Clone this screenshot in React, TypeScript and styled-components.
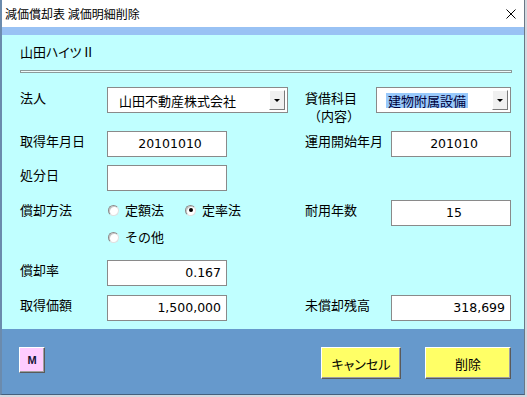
import React from "react";
import styled, { createGlobalStyle } from "styled-components";

const GlobalStyle = createGlobalStyle`
  html, body { margin: 0; padding: 0; background: #d4d9e0; }
  body { font-family: "Noto Sans CJK JP", "Noto Sans", sans-serif; color: #000; }
  #root { width: 527px; height: 397px; overflow: hidden; }
`;

const Window = styled.div`
  width: 525px;
  box-sizing: border-box;
  display: flex;
  flex-direction: column;
  border-left: 2px solid #6b8bad;
  border-right: 1px solid #6a7785;
  border-bottom: 1px solid #44607e;
`;

const TitleBar = styled.div`
  height: 27px;
  background: #fff;
  display: flex;
  align-items: center;
  justify-content: space-between;
  padding: 0 8px 0 3px;
  font-size: 12px;
  line-height: 27px;
`;

const CloseIcon = styled.svg`
  width: 10px;
  height: 10px;
  display: block;
`;

const Strip = styled.div`
  height: 8px;
  background: #99c2f4;
`;

const Body = styled.div`
  background: #c0ffff;
  padding: 7px 12px 8px 18px;
  display: flex;
  flex-direction: column;
`;

const Header = styled.div`
  font-size: 13px;
  line-height: 20px;
  height: 20px;
  font-feature-settings: "palt";
`;

const Separator = styled.div`
  margin-top: 8px;
  height: 3px;
  box-sizing: border-box;
  border: 1px solid #8c9a9a;
  background: #eefcfc;
`;

const Row = styled.div<{ $h: number; $mt: number }>`
  display: flex;
  align-items: flex-start;
  height: ${(p) => p.$h}px;
  margin-top: ${(p) => p.$mt}px;
`;

const LeftCell = styled.div`
  width: 285px;
  display: flex;
  align-items: flex-start;
`;

const RightCell = styled.div`
  display: flex;
  align-items: flex-start;
`;

const Label = styled.div<{ $w: number; $lh?: number; $pt?: number }>`
  width: ${(p) => p.$w}px;
  font-size: 13px;
  line-height: ${(p) => p.$lh ?? 20}px;
  padding-top: ${(p) => p.$pt ?? 0}px;
  flex-shrink: 0;
`;

const SubLine = styled.div`
  padding-left: 3px;
`;

const TextBox = styled.div<{ $w: number; $align: "center" | "right" }>`
  width: ${(p) => p.$w}px;
  height: 26px;
  box-sizing: border-box;
  border: 1px solid #8a8a8a;
  background: #fff;
  font-family: "DejaVu Sans", sans-serif;
  font-size: 12.5px;
  line-height: 24px;
  text-align: ${(p) => p.$align};
  padding: ${(p) => (p.$align === "right" ? "0 5px 0 0" : "0 0 0 6px")};
`;

const Combo = styled.div<{ $w: number }>`
  width: ${(p) => p.$w}px;
  height: 26px;
  box-sizing: border-box;
  border: 1px solid #8a8a8a;
  background: #fff;
  display: flex;
  align-items: center;
  justify-content: space-between;
  padding: 0 2px 0 9px;
  font-size: 13px;
`;

const ComboText = styled.span<{ $sel?: boolean }>`
  line-height: 15px;
  padding: 0 2px;
  background: ${(p) => (p.$sel ? "#99c9fb" : "transparent")};
  color: ${(p) => (p.$sel ? "#00003a" : "#000")};
`;

const DropButton = styled.div`
  width: 16px;
  height: 20px;
  box-sizing: border-box;
  background: #f0f0f0;
  border: 1px solid;
  border-color: #fff #7a7a7a #7a7a7a #fff;
  display: flex;
  align-items: center;
  justify-content: center;
`;

const Triangle = styled.div`
  width: 0;
  height: 0;
  border-left: 3px solid transparent;
  border-right: 3px solid transparent;
  border-top: 3px solid #000;
`;

const RadioGroup = styled.div`
  display: grid;
  grid-template-columns: 77px auto;
  row-gap: 7px;
  padding-left: 1px;
`;

const RadioItem = styled.div`
  display: flex;
  align-items: center;
  gap: 6px;
  font-size: 13px;
  line-height: 20px;
`;

const RadioCircle = styled.span<{ $on?: boolean }>`
  width: 11px;
  height: 11px;
  box-sizing: border-box;
  border-radius: 50%;
  border: 1px solid;
  border-color: #8a8a8a #e0e0e0 #e0e0e0 #8a8a8a;
  background: #fff;
  box-shadow: inset 1px 1px 0 #c8c8c8;
  display: flex;
  align-items: center;
  justify-content: center;
  &::after {
    content: "";
    width: 4px;
    height: 4px;
    border-radius: 50%;
    background: ${(p) => (p.$on ? "#000" : "transparent")};
  }
`;

const Footer = styled.div`
  background: #6699cc;
  height: 65px;
  box-sizing: border-box;
  padding: 18px 13px 0 17px;
  display: flex;
  align-items: flex-start;
`;

const Spacer = styled.div`
  flex: 1;
`;

const Button = styled.div<{ $bg: string; $w: number; $h: number; $mr?: number }>`
  width: ${(p) => p.$w}px;
  height: ${(p) => p.$h}px;
  margin-right: ${(p) => p.$mr ?? 0}px;
  box-sizing: border-box;
  background: ${(p) => p.$bg};
  border: 1px solid;
  border-color: #fff #5a5a5a #5a5a5a #fff;
  box-shadow: inset -1px -1px 0 #a0a0a0;
  display: flex;
  align-items: center;
  justify-content: center;
  font-size: 13px;
  font-feature-settings: "palt";
`;

const MLabel = styled.span`
  font-family: "Liberation Sans", Arial, sans-serif;
  font-weight: bold;
  font-size: 11px;
  color: #151535;
`;

export default function App() {
  return (
    <>
      <GlobalStyle />
      <Window>
        <TitleBar>
          <span>減価償却表 減価明細削除</span>
          <CloseIcon viewBox="0 0 10 10">
            <path d="M0.5 0.5 L9.5 9.5 M9.5 0.5 L0.5 9.5" stroke="#000" strokeWidth="1" fill="none" />
          </CloseIcon>
        </TitleBar>
        <Strip />
        <Body>
          <Header>山田ハイツⅡ</Header>
          <Separator />
          <Row $h={26} $mt={14}>
            <LeftCell>
              <Label $w={87} $pt={1}>法人</Label>
              <Combo $w={181}>
                <ComboText>山田不動産株式会社</ComboText>
                <DropButton><Triangle /></DropButton>
              </Combo>
            </LeftCell>
            <RightCell>
              <Label $w={71} $lh={18} $pt={2}>
                <div>貸借科目</div>
                <SubLine>（内容）</SubLine>
              </Label>
              <Combo $w={135}>
                <ComboText $sel>建物附属設備</ComboText>
                <DropButton><Triangle /></DropButton>
              </Combo>
            </RightCell>
          </Row>
          <Row $h={25} $mt={18}>
            <LeftCell>
              <Label $w={87}>取得年月日</Label>
              <TextBox $w={120} $align="center">20101010</TextBox>
            </LeftCell>
            <RightCell>
              <Label $w={86}>運用開始年月</Label>
              <TextBox $w={120} $align="center">201010</TextBox>
            </RightCell>
          </Row>
          <Row $h={26} $mt={9}>
            <LeftCell>
              <Label $w={87}>処分日</Label>
              <TextBox $w={120} $align="center" />
            </LeftCell>
          </Row>
          <Row $h={51} $mt={9}>
            <LeftCell>
              <Label $w={87}>償却方法</Label>
              <RadioGroup>
                <RadioItem><RadioCircle />定額法</RadioItem>
                <RadioItem><RadioCircle $on />定率法</RadioItem>
                <RadioItem><RadioCircle />その他</RadioItem>
              </RadioGroup>
            </LeftCell>
            <RightCell>
              <Label $w={86}>耐用年数</Label>
              <TextBox $w={120} $align="center">15</TextBox>
            </RightCell>
          </Row>
          <Row $h={26} $mt={9}>
            <LeftCell>
              <Label $w={87}>償却率</Label>
              <TextBox $w={120} $align="right">0.167</TextBox>
            </LeftCell>
          </Row>
          <Row $h={26} $mt={9}>
            <LeftCell>
              <Label $w={87}>取得価額</Label>
              <TextBox $w={120} $align="right">1,500,000</TextBox>
            </LeftCell>
            <RightCell>
              <Label $w={86}>未償却残高</Label>
              <TextBox $w={120} $align="right">318,699</TextBox>
            </RightCell>
          </Row>
        </Body>
        <Footer>
          <Button $bg="#ffccff" $w={26} $h={26}><MLabel>M</MLabel></Button>
          <Spacer />
          <Button $bg="#ffff66" $w={80} $h={32} $mr={24}>キャンセル</Button>
          <Button $bg="#ffff66" $w={86} $h={32}>削除</Button>
        </Footer>
      </Window>
    </>
  );
}
